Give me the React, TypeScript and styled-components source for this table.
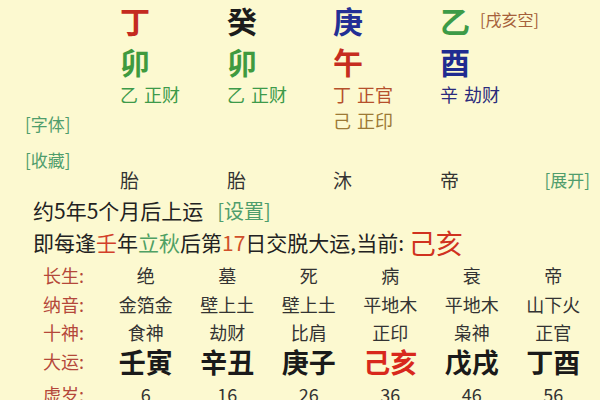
import React from "react";
import styled, { createGlobalStyle } from "styled-components";

const GlobalStyle = createGlobalStyle`
  html, body { margin: 0; padding: 0; background: #fcf9d0; }
  body { font-family: "Noto Sans CJK SC", "Noto Sans", sans-serif; }
`;

const Page = styled.div`
  width: 600px;
  height: 400px;
  overflow: hidden;
  background: #fcf9d0;
  color: #2a2a2a;
  font-family: "Noto Sans CJK SC", "Noto Sans", sans-serif;
`;

const PillarGrid = styled.div`
  display: grid;
  grid-template-columns: 120px 107px 106px 107px 100px 1fr;
  grid-template-rows: 40px 42px 26px 26px 36px 20px;
  padding-right: 10px;
`;

const Slot = styled.div<{ $col: number; $row: number }>`
  grid-column: ${(p) => p.$col};
  grid-row: ${(p) => p.$row};
  display: flex;
  align-items: center;
  min-width: 0;
`;

const Big = styled.span<{ $c: string }>`
  font-size: 30px;
  line-height: 1.2;
  font-weight: 600;
  color: ${(p) => p.$c};
  white-space: nowrap;
`;

const Sub = styled.span<{ $c: string }>`
  font-size: 18px;
  line-height: 1.2;
  color: ${(p) => p.$c};
  white-space: nowrap;
  word-spacing: 2px;
`;

const Link = styled.span<{ $size?: number }>`
  font-size: ${(p) => p.$size ?? 17}px;
  line-height: 1.2;
  color: #4f9d6c;
  white-space: nowrap;
`;

const SideSlot = styled(Slot)`
  padding-left: 25px;
  align-items: flex-end;
`;

const EndSlot = styled(Slot)`
  justify-content: flex-end;
`;

const Empty = styled.span`
  font-size: 16px;
  line-height: 1.2;
  color: #a5603a;
  margin-left: 10px;
  font-weight: 400;
`;

const Stage = styled.span`
  font-size: 19px;
  line-height: 1.2;
  color: #333;
`;

const Lines = styled.div`
  padding-left: 33px;
  display: flex;
  flex-direction: column;
  margin-top: 4px;
`;

const Line = styled.div<{ $h: number }>`
  height: ${(p) => p.$h}px;
  display: flex;
  align-items: center;
  font-size: 21px;
  line-height: 1.2;
  color: #222;
  white-space: nowrap;
`;

const Hl = styled.span<{ $c: string; $size?: number }>`
  color: ${(p) => p.$c};
  font-size: ${(p) => (p.$size ? `${p.$size}px` : "inherit")};
`;

const Table = styled.div`
  display: grid;
  grid-template-columns: 62px repeat(6, 81.5px);
  grid-template-rows: 28px 29px 27px 31px 36px;
  padding-left: 43px;
  margin-top: 4px;
`;

const Label = styled.div`
  font-size: 18px;
  line-height: 1.2;
  color: #b4483a;
  display: flex;
  align-items: center;
`;

const Cell = styled.div<{ $big?: boolean; $c?: string }>`
  display: flex;
  align-items: center;
  justify-content: center;
  font-size: ${(p) => (p.$big ? 27 : 18)}px;
  line-height: 1.1;
  font-weight: ${(p) => (p.$big ? 700 : 400)};
  color: ${(p) => p.$c ?? (p.$big ? "#1a1a1a" : "#333")};
  white-space: nowrap;
`;

const stems = [
  { t: "丁", c: "#c42a1f" },
  { t: "癸", c: "#1c1c1c" },
  { t: "庚", c: "#232f95" },
  { t: "乙", c: "#3d9b47" },
];
const branches = [
  { t: "卯", c: "#3f9a3f" },
  { t: "卯", c: "#3f9a3f" },
  { t: "午", c: "#c62d20" },
  { t: "酉", c: "#202c90" },
];
const hidden = [
  { t: "乙 正财", c: "#3d9a4a" },
  { t: "乙 正财", c: "#3d9a4a" },
  { t: "丁 正官", c: "#b5502c" },
  { t: "辛 劫财", c: "#2b2b7c" },
];
const stages = ["胎", "胎", "沐", "帝"];

const rows: { label: string; cells: string[]; big?: boolean }[] = [
  { label: "长生:", cells: ["绝", "墓", "死", "病", "衰", "帝"] },
  { label: "纳音:", cells: ["金箔金", "壁上土", "壁上土", "平地木", "平地木", "山下火"] },
  { label: "十神:", cells: ["食神", "劫财", "比肩", "正印", "枭神", "正官"] },
  { label: "大运:", cells: ["壬寅", "辛丑", "庚子", "己亥", "戊戌", "丁酉"], big: true },
  { label: "虚岁:", cells: ["6", "16", "26", "36", "46", "56"] },
];

export default function App() {
  return (
    <Page>
      <GlobalStyle />
      <PillarGrid>
        {stems.map((s, i) => (
          <Slot key={`s${i}`} $col={i + 2} $row={1}>
            <Big $c={s.c}>{s.t}</Big>
            {i === 3 && <Empty>[戌亥空]</Empty>}
          </Slot>
        ))}
        {branches.map((s, i) => (
          <Slot key={`b${i}`} $col={i + 2} $row={2}>
            <Big $c={s.c}>{s.t}</Big>
          </Slot>
        ))}
        {hidden.map((s, i) => (
          <Slot key={`h${i}`} $col={i + 2} $row={3}>
            <Sub $c={s.c}>{s.t}</Sub>
          </Slot>
        ))}
        <SideSlot $col={1} $row={4}>
          <Link>[字体]</Link>
        </SideSlot>
        <Slot $col={4} $row={4}>
          <Sub $c="#9c7a36">己 正印</Sub>
        </Slot>
        <SideSlot $col={1} $row={5}>
          <Link>[收藏]</Link>
        </SideSlot>
        {stages.map((s, i) => (
          <Slot key={`g${i}`} $col={i + 2} $row={6}>
            <Stage>{s}</Stage>
          </Slot>
        ))}
        <EndSlot $col={6} $row={6}>
          <Link>[展开]</Link>
        </EndSlot>
      </PillarGrid>

      <Lines>
        <Line $h={34}>
          约5年5个月后上运
          <Link $size={20} style={{ marginLeft: 14 }}>
            [设置]
          </Link>
        </Line>
        <Line $h={30}>
          即每逢<Hl $c="#d2402a">壬</Hl>年<Hl $c="#4fa064">立秋</Hl>后第
          <Hl $c="#d0502a">17</Hl>日交脱大运,当前:&nbsp;
          <Hl $c="#d0321f" $size={27}>
            己亥
          </Hl>
        </Line>
      </Lines>

      <Table>
        {rows.map((r) => (
          <React.Fragment key={r.label}>
            <Label>{r.label}</Label>
            {r.cells.map((c, i) => (
              <Cell
                key={i}
                $big={r.big}
                $c={r.big && c === "己亥" ? "#d8281c" : undefined}
              >
                {c}
              </Cell>
            ))}
          </React.Fragment>
        ))}
      </Table>
    </Page>
  );
}
